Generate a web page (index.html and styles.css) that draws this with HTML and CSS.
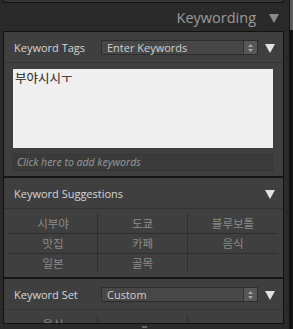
FILE: index.html
```html
<!DOCTYPE html>
<html lang="ko">
<head>
    <meta charset="UTF-8">
    <title>Keywording</title>
    <link rel="stylesheet" href="styles.css">
</head>
<body>
    <div class="main">
        <div class="top-panel"></div>
        <div class="panel-title">
            <span>Keywording</span>
            <svg class="title-arrow" width="10" height="10" viewBox="0 0 10 10"><path d="M0 1 H10 L5 10 Z"/></svg>
        </div>
        <div class="panel">
            <div class="section">
                <div class="section-head">
                    <span class="label">Keyword Tags</span>
                    <div class="select">
                        <span>Enter Keywords</span>
                        <span class="spin"><svg width="7" height="10" viewBox="0 0 7 10"><path d="M3.5 1 L6 4 H1 Z M3.5 9 L6 6 H1 Z"/></svg></span>
                    </div>
                    <svg class="arrow" width="10" height="10" viewBox="0 0 10 10"><path d="M0 1 H10 L5 10 Z"/></svg>
                </div>
                <div class="tags-body">
                    <div class="tag-box">부야시시ㅜ</div>
                    <div class="add-box">Click here to add keywords</div>
                </div>
            </div>
            <div class="section">
                <div class="section-head">
                    <span class="label grow">Keyword Suggestions</span>
                    <svg class="arrow" width="10" height="10" viewBox="0 0 10 10"><path d="M0 1 H10 L5 10 Z"/></svg>
                </div>
                <div class="kw-grid">
                    <div class="cell">시부야</div>
                    <div class="cell">도쿄</div>
                    <div class="cell">블루보틀</div>
                    <div class="cell">맛집</div>
                    <div class="cell">카페</div>
                    <div class="cell">음식</div>
                    <div class="cell">일본</div>
                    <div class="cell">골목</div>
                    <div class="cell"></div>
                </div>
            </div>
            <div class="section">
                <div class="section-head">
                    <span class="label">Keyword Set</span>
                    <div class="select">
                        <span>Custom</span>
                        <span class="spin"><svg width="7" height="10" viewBox="0 0 7 10"><path d="M3.5 1 L6 4 H1 Z M3.5 9 L6 6 H1 Z"/></svg></span>
                    </div>
                    <svg class="arrow" width="10" height="10" viewBox="0 0 10 10"><path d="M0 1 H10 L5 10 Z"/></svg>
                </div>
                <div class="kw-grid">
                    <div class="cell">음식</div>
                    <div class="cell"></div>
                    <div class="cell"></div>
                </div>
            </div>
        </div>
        <div class="bottom"><span class="mark"></span></div>
    </div>
    <div class="scrollbar"><div class="thumb"></div></div>
</body>
</html>
```

FILE: styles.css
```css
body {
    margin: 0;
    background-color: #2a2a2a;
    font-family: 'Open Sans', 'Noto Sans CJK KR', sans-serif;
    display: flex;
    height: 329px;
    overflow: hidden;
}
.main {
    width: 289px;
}
.top-panel {
    margin-left: 3px;
    width: 281px;
    height: 3px;
    box-sizing: border-box;
    background-color: #353535;
    border: 1px solid #111;
    border-top: none;
}
.panel-title {
    height: 28px;
    display: flex;
    justify-content: flex-end;
    align-items: center;
    padding-right: 10px;
    color: #9a9a9a;
    font-size: 14.5px;
}
.title-arrow {
    margin-left: 13px;
    margin-top: 1px;
    fill: #8a8a8a;
}
.panel {
    margin-left: 3px;
    width: 281px;
    height: 293px;
    box-sizing: border-box;
    border: 1px solid #111;
    background-color: #3f3f3f;
    overflow: hidden;
}
.section + .section {
    border-top: 2px solid #161616;
}
.section-head {
    height: 30px;
    display: flex;
    align-items: center;
    padding-left: 10px;
    border-bottom: 1px solid #333;
    color: #d6d6d6;
    font-size: 11px;
}
.label {
    width: 87px;
}
.label.grow {
    flex: 1;
    width: auto;
}
.select {
    width: 157px;
    height: 15px;
    margin-top: 1px;
    box-sizing: border-box;
    border: 1px solid #2c2c2c;
    background-color: #474747;
    display: flex;
    align-items: center;
    color: #d0d0d0;
}
.select span:first-child {
    flex: 1;
    padding-left: 5px;
}
.spin {
    width: 13px;
    height: 13px;
    background-color: #575757;
    border-left: 1px solid #333;
    display: flex;
    justify-content: center;
    align-items: center;
}
.spin svg {
    fill: #a8a8a8;
}
.arrow {
    margin-left: 7px;
    margin-top: 1px;
    fill: #e2e2e2;
}
.label.grow + .arrow {
    margin-right: 8px;
}
.tags-body {
    padding: 6px 10px 5px 9px;
}
.tag-box {
    width: 260px;
    height: 79px;
    box-sizing: border-box;
    background-color: #efefef;
    padding: 1px 2px 0;
    color: #222;
    font-size: 12.5px;
    line-height: 16px;
    font-family: 'Noto Sans CJK KR', sans-serif;
}
.add-box {
    margin-top: 6px;
    width: 260px;
    height: 17px;
    box-sizing: border-box;
    border: 1px solid #353535;
    background-color: #3b3b3b;
    color: #9a9a9a;
    font-style: italic;
    font-size: 10.5px;
    line-height: 15px;
    padding-left: 3px;
}
.kw-grid {
    margin: 5px 0 4px 5px;
    width: 269px;
    display: grid;
    grid-template-columns: 89px 90px 90px;
}
.cell {
    height: 19px;
    line-height: 19px;
    text-align: center;
    color: #8c8c8c;
    font-size: 11.5px;
    font-family: 'Noto Sans CJK KR', sans-serif;
    border-bottom: 1px solid #2e2e2e;
    border-right: 1px solid #2e2e2e;
}
.cell:nth-child(3n) {
    border-right: none;
}
.cell:nth-child(n+7) {
    border-bottom: none;
}
.bottom {
    height: 4px;
    position: relative;
}
.mark {
    position: absolute;
    left: 142px;
    top: 2px;
    width: 5px;
    height: 2px;
    background-color: #6a6a6a;
}
.scrollbar {
    width: 4px;
    background-color: #121212;
}
.thumb {
    margin-left: 1px;
    width: 3px;
    height: 30px;
    background-color: #5a5a5a;
}
```
